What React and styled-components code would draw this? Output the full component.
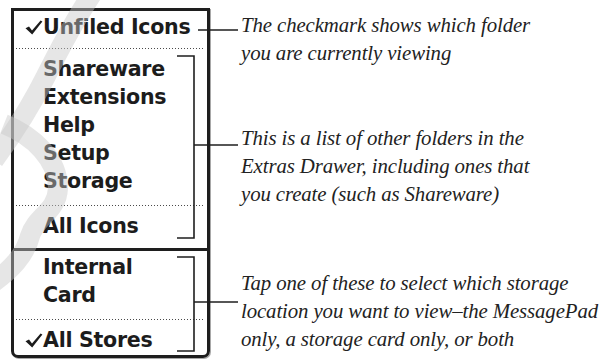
import React from "react";
import styled, { createGlobalStyle } from "styled-components";

const GlobalStyle = createGlobalStyle`
  html, body { margin: 0; padding: 0; background: #ffffff; }
  #root { width: 608px; height: 364px; overflow: hidden; }
`;

const Page = styled.div`
  position: relative;
  width: 608px;
  height: 364px;
  box-sizing: border-box;
  padding: 8px 0 0 11px;
  display: flex;
  align-items: flex-start;
  background: #fff;
`;

const Panel = styled.div`
  width: 199px;
  height: 350px;
  box-sizing: border-box;
  border: 3px solid #1e1e1e;
  border-radius: 0 0 7px 7px;
  box-shadow: 1px 1px 0 #a8a8a8;
  display: flex;
  flex-direction: column;
  padding-top: 2px;
  font-family: "DejaVu Sans", "Open Sans", sans-serif;
  font-weight: bold;
  font-size: 20.6px;
  color: #1c1c1c;
`;

const Item = styled.div`
  height: 28px;
  line-height: 28px;
  white-space: nowrap;
  padding-left: ${(p) => (p.$checked ? "11px" : "29px")};
  display: flex;
  align-items: center;
  letter-spacing: -0.3px;
`;

const CheckIcon = styled.svg`
  width: 18px;
  height: 15px;
  flex: none;
  margin-top: 1px;
`;

const Dotted = styled.div`
  height: 1px;
  background-image: repeating-linear-gradient(
    to right,
    #4a4a4a 0 1px,
    transparent 1px 3px
  );
  margin: ${(p) => p.$mt}px 2px 6px 2px;
`;

const Rule = styled.div`
  height: 3px;
  background: #1e1e1e;
  margin: 8px 0 2px;
`;

const Captions = styled.div`
  display: flex;
  flex-direction: column;
  margin-left: 31px;
  font-family: "Liberation Serif", "Times New Roman", serif;
  font-style: italic;
  font-size: 20.8px;
  line-height: 28px;
  color: #222;
  letter-spacing: -0.1px;
`;

const Caption = styled.p`
  margin: ${(p) => p.$mt}px 0 0;
  white-space: nowrap;
`;

const Overlay = styled.svg`
  position: absolute;
  left: 0;
  top: 0;
  pointer-events: none;
`;

function Check() {
  return (
    <CheckIcon viewBox="0 0 18 15">
      <path d="M0.5 8.2 L4 6.6 L7 10.6 L15.6 0.5 L17.4 1.6 L7.2 14.6 Z" fill="#1c1c1c" />
    </CheckIcon>
  );
}

export default function App() {
  return (
    <>
      <GlobalStyle />
      <Page>
        <Panel>
          <Item $checked>
            <Check />
            Unfiled Icons
          </Item>
          <Dotted $mt={7} />
          <Item>Shareware</Item>
          <Item>Extensions</Item>
          <Item>Help</Item>
          <Item>Setup</Item>
          <Item>Storage</Item>
          <Dotted $mt={10} />
          <Item>All Icons</Item>
          <Rule />
          <Item>Internal</Item>
          <Item>Card</Item>
          <Dotted $mt={10} />
          <Item $checked>
            <Check />
            All Stores
          </Item>
        </Panel>
        <Captions>
          <Caption $mt={3}>
            The checkmark shows which folder
            <br />
            you are currently viewing
          </Caption>
          <Caption $mt={57}>
            This is a list of other folders in the
            <br />
            Extras Drawer, including ones that
            <br />
            you create (such as Shareware)
          </Caption>
          <Caption $mt={61}>
            Tap one of these to select which storage
            <br />
            location you want to view–the MessagePad
            <br />
            only, a storage card only, or both
          </Caption>
        </Captions>
        <Overlay width="608" height="364" viewBox="0 0 608 364">
          <g fill="none" stroke="rgba(200,200,200,0.45)" strokeWidth="20">
            <path d="M92 -6 C 72 24, 58 52, 46 76 C 34 100, 16 130, -6 160" />
            <path d="M4 124 C 34 136, 58 160, 58 188 C 57 212, 36 216, 30 236 C 25 256, 10 270, -6 282" />
          </g>
          <g fill="none" stroke="#1e1e1e" strokeWidth="1.6">
            <path d="M198 30 H238" />
            <path d="M177 56 H194 V238 H177" />
            <path d="M194 145 H238" />
            <path d="M177 257 H194 V351 H177" />
            <path d="M194 302 H238" />
          </g>
        </Overlay>
      </Page>
    </>
  );
}
